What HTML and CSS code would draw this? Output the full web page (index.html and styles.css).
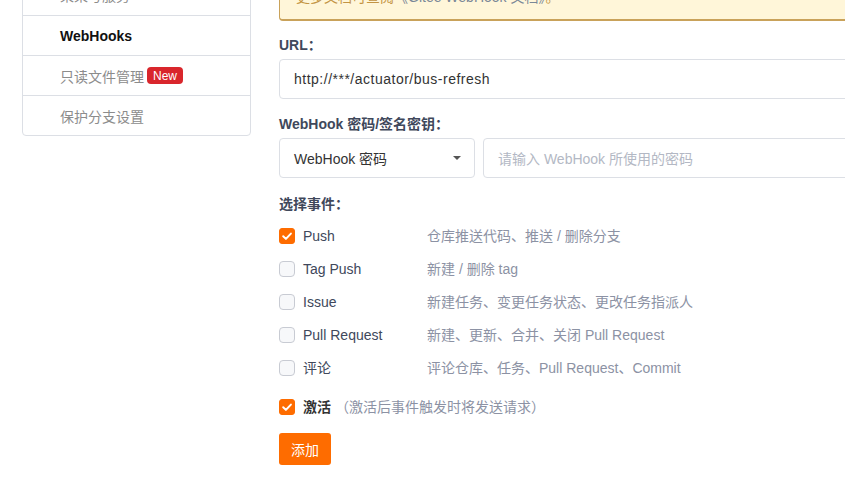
FILE: index.html
```html
<!DOCTYPE html>
<html lang="zh-CN">
<head>
<meta charset="utf-8">
<title>WebHooks</title>
<link rel="stylesheet" href="styles.css">
</head>
<body>
<div class="page">
  <aside class="sidebar">
    <div class="nav-item">某某号服务</div>
    <div class="nav-item active">WebHooks</div>
    <div class="nav-item">只读文件管理<span class="badge">New</span></div>
    <div class="nav-item">保护分支设置</div>
  </aside>
  <main class="main">
    <div class="notice">更多文档可查阅<span class="notice-link">《Gitee WebHook 文档》</span>。</div>

    <label class="field-label first">URL：</label>
    <div class="input"><span class="value url">http://***/actuator/bus-refresh</span></div>

    <label class="field-label second">WebHook 密码/签名密钥：</label>
    <div class="pw-row">
      <div class="select">
        <span class="value">WebHook 密码</span>
        <span class="caret"></span>
      </div>
      <div class="input grow"><span class="placeholder">请输入 WebHook 所使用的密码</span></div>
    </div>

    <label class="field-label">选择事件：</label>
    <div class="events">
      <div class="event">
        <span class="check on"><svg viewBox="0 0 16 16" width="16" height="16"><path d="M4.2 8.3 L6.9 10.9 L11.9 5.6" fill="none" stroke="#fff" stroke-width="2" stroke-linecap="round" stroke-linejoin="round"/></svg></span>
        <span class="event-name">Push</span>
        <span class="event-desc">仓库推送代码、推送 / 删除分支</span>
      </div>
      <div class="event">
        <span class="check"></span>
        <span class="event-name">Tag Push</span>
        <span class="event-desc">新建 / 删除 tag</span>
      </div>
      <div class="event">
        <span class="check"></span>
        <span class="event-name">Issue</span>
        <span class="event-desc">新建任务、变更任务状态、更改任务指派人</span>
      </div>
      <div class="event">
        <span class="check"></span>
        <span class="event-name">Pull Request</span>
        <span class="event-desc">新建、更新、合并、关闭 Pull Request</span>
      </div>
      <div class="event">
        <span class="check"></span>
        <span class="event-name">评论</span>
        <span class="event-desc">评论仓库、任务、Pull Request、Commit</span>
      </div>
    </div>

    <div class="activate">
      <span class="check on"><svg viewBox="0 0 16 16" width="16" height="16"><path d="M4.2 8.3 L6.9 10.9 L11.9 5.6" fill="none" stroke="#fff" stroke-width="2" stroke-linecap="round" stroke-linejoin="round"/></svg></span>
      <span class="activate-name">激活</span>
      <span class="activate-hint">（激活后事件触发时将发送请求）</span>
    </div>

    <button class="btn-add" type="button">添加</button>
  </main>
</div>
</body>
</html>
```

FILE: styles.css
```css
html, body {
  margin: 0;
  padding: 0;
  background: #fff;
  overflow: hidden;
}
body {
  font-family: "Liberation Sans", "Noto Sans CJK SC", sans-serif;
  font-size: 14px;
  color: #333;
  width: 845px;
  height: 493px;
}
.page {
  display: flex;
  align-items: flex-start;
  padding-left: 22px;
  gap: 28px;
}
.sidebar {
  width: 227px;
  margin-top: -26px;
  border: 1px solid #dcdfe5;
  border-radius: 4px;
  flex: none;
}
.nav-item {
  height: 39px;
  display: flex;
  align-items: center;
  padding-left: 37px;
  color: #8c8c8c;
  border-top: 1px solid #dcdfe5;
}
.nav-item:first-child {
  border-top: none;
  height: 40px;
}
.nav-item.active {
  color: #111;
  font-weight: bold;
}
.badge {
  display: inline-flex;
  align-items: center;
  height: 17px;
  margin-left: 3px;
  padding: 0 6px;
  border-radius: 4px;
  background: #d9262c;
  color: #fff;
  font-size: 12px;
  font-weight: normal;
}
.main {
  width: 620px;
  flex: none;
}
.notice {
  margin-top: -24px;
  padding: 10px 16px 12px;
  line-height: 20px;
  background: #fff6d9;
  border: 1px solid #c9a25a;
  border-bottom-width: 2px;
  border-top-color: #e8d5a7;
  border-radius: 4px;
  color: #c39444;
}
.notice-link {
  color: #7a8797;
}
.field-label {
  display: block;
  margin-top: 16px;
  margin-bottom: 4px;
  line-height: 20px;
  font-weight: bold;
  color: #40485b;
}
.field-label.first {
  margin-top: 14px;
}
.field-label.second {
  margin-top: 15px;
}
.input, .select {
  height: 40px;
  box-sizing: border-box;
  border: 1px solid #dcdfe5;
  border-radius: 4px;
  padding-left: 14px;
  display: flex;
  align-items: center;
  background: #fff;
}
.value {
  color: #333;
}
.url {
  letter-spacing: 0.5px;
}
.placeholder {
  color: #b3b8c4;
}
.pw-row {
  display: flex;
  gap: 8px;
}
.select {
  width: 196px;
  flex: none;
  justify-content: space-between;
  padding-right: 13px;
}
.caret {
  width: 0;
  height: 0;
  border-left: 4px solid transparent;
  border-right: 4px solid transparent;
  border-top: 4px solid #555;
}
.grow {
  flex: 1;
}
.events {
  margin-top: 12px;
  display: flex;
  flex-direction: column;
  gap: 13px;
}
.event, .activate {
  display: flex;
  align-items: center;
  height: 20px;
  line-height: 20px;
}
.check {
  width: 16px;
  height: 16px;
  box-sizing: border-box;
  border: 1px solid #c8cbd3;
  border-radius: 4px;
  background: #f7f8fa;
  flex: none;
  display: flex;
}
.check.on {
  border-color: #fe6c00;
  background: #fe6c00;
  border-radius: 3px;
}
.check svg {
  margin: -1px;
}
.event-name {
  margin-left: 8px;
  width: 124px;
  color: #40485b;
}
.event-desc {
  color: #8c92a4;
}
.activate {
  margin-top: 19px;
}
.activate-name {
  margin-left: 8px;
  font-weight: bold;
  color: #333;
}
.activate-hint {
  margin-left: 4px;
  color: #8c92a4;
}
.btn-add {
  margin-top: 16px;
  height: 32px;
  padding: 0 12px;
  border: none;
  border-radius: 3px;
  background: #fe6c00;
  color: #fff;
  font-family: inherit;
  font-size: 14px;
  display: block;
}
```
